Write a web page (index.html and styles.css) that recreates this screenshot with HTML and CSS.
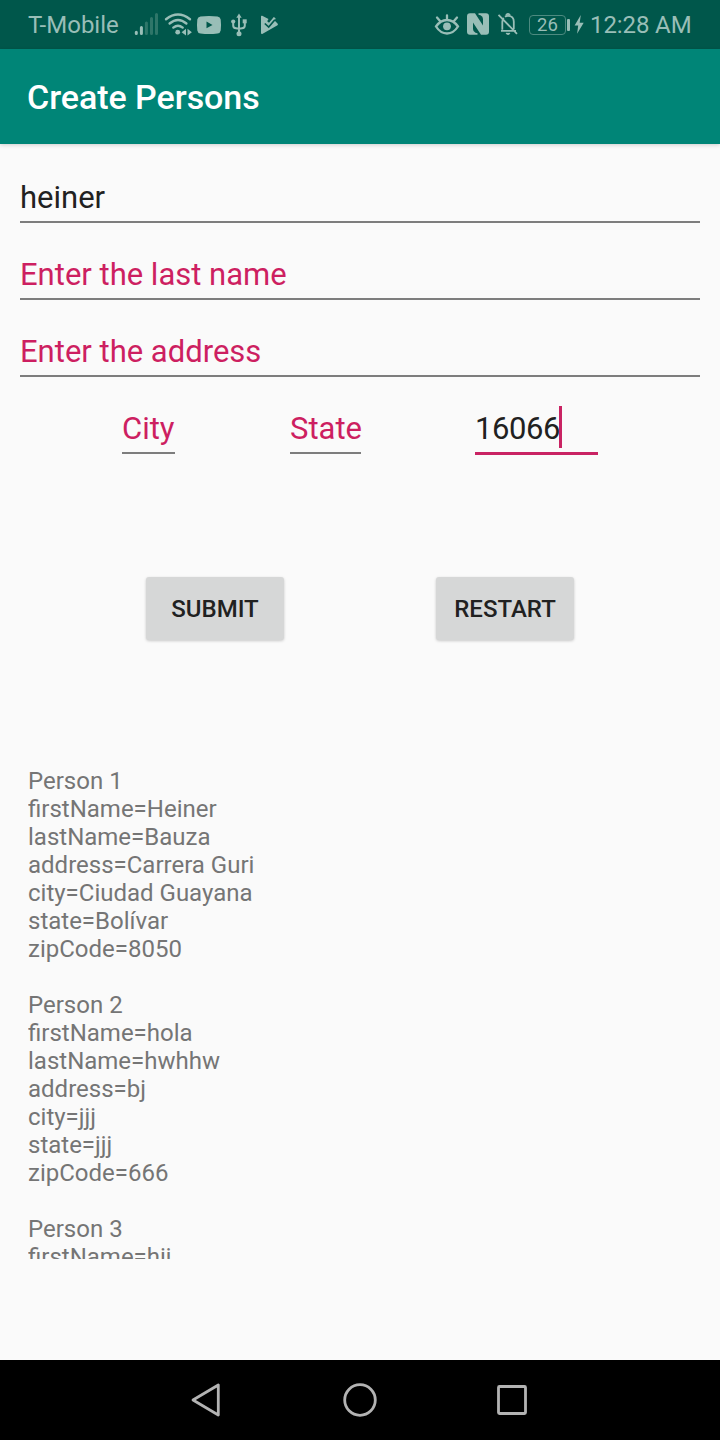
FILE: index.html
```html
<!DOCTYPE html>
<html lang="en">
<head>
<meta charset="utf-8">
<title>Create Persons</title>
<link rel="stylesheet" href="styles.css">
</head>
<body>
<div class="screen">
  <header class="status">
    <span class="carrier">T-Mobile</span>
    <svg class="icons-left" width="150" height="49" viewBox="130 0 150 49">
      <g stroke-width="3" stroke-linecap="round" fill="none" stroke="#99beb7">
        <path d="M136.300 32.200v1.300M141.400 27.500v6"/>
        <path stroke="#2e7669" d="M146.400 23v10.500M151.500 18.500v15M156.500 14.500v19"/>
      </g>
      <g fill="none" stroke="#99beb7" stroke-width="2.400" stroke-linecap="round">
        <path d="M166 19.200Q178 9.800 190 19.200M169.600 23.500Q178 16.500 186.400 23.500M173.300 27.600Q178 23.700 182.700 27.600"/>
      </g>
      <circle cx="177.700" cy="32.200" r="2.400" fill="#99beb7"/>
      <path d="M186 28.800v6.700l-4.400-3.200zM187.500 28.800v6.700l4.400-3.200z" fill="#99beb7"/>
      <path fill="#99beb7" fill-rule="evenodd" d="M200.500 16.500Q209 15.500 217.500 16.500Q220.300 16.800 220.700 19.500Q221.400 25 220.700 30.500Q220.300 33.200 217.500 33.500Q209 34.500 200.500 33.500Q197.700 33.200 197.300 30.500Q196.700 25 197.300 19.500Q197.700 16.800 200.500 16.500ZM206.500 21.500v6.800l6-3.400z"/>
      <path d="M239 17v17M233.200 22v3.500q0 2.500 2.800 2.800l3 .500 3-.500q2.800-.300 2.800-2.800v-3" fill="none" stroke="#99beb7" stroke-width="2"/>
      <g fill="#99beb7"><path d="M239 13.500l2.700 4.200h-5.400z"/><circle cx="239" cy="33.700" r="2.500"/><circle cx="233.200" cy="21.500" r="2.100"/><path d="M242.700 19.300h4v4h-4z"/></g>
      <path fill="#99beb7" d="M261 16.500q0-1.200 1.200-.7l6.300 3.200-1.300 2.200 1.800 1.600 4.800-5.800 1.800 1.200-.8 2.500 2.700 2.800q1 .9 0 1.700l-14.800 8.600q-1.700.7-1.700-1z"/>
      <path d="M264.800 23.500l3.900 3.600 6.200-7.300" fill="none" stroke="#00574b" stroke-width="1.700"/>
    </svg>
    <svg class="icons-right" width="90" height="49" viewBox="432 0 90 49">
      <g fill="none" stroke="#99beb7" stroke-width="2.300" stroke-linecap="round">
        <path d="M436 26.500q4.500-6.500 11-6.500t11 6.500q-4.500 7-11 7t-11-7zM447 19.500v-4.200M440 21l-3-3.500M454 21l3-3.500"/>
      </g>
      <circle cx="447" cy="26.300" r="3.900" fill="#99beb7"/>
      <path fill="#99beb7" d="M470 13.200h5l8 12.300V19q0-2.800-2.500-3.700l-2-.6v-1.500h7.500q3 0 3 3v15.600q0 3-3 3h-5l-8-12.300V29q0 2.800 2.500 3.700l2 .6v1.500H470q-3 0-3-3V16.200q0-3 3-3z"/>
      <g fill="none" stroke="#99beb7" stroke-width="1.800" transform="translate(0 .8)">
        <path d="M498.500 14l18.500 19M501 30h15M502.300 29v-8q0-2.300 1.500-3.800M505 16q1.300-1 3-1 5.800 0 5.800 6v7.500"/>
        <path d="M506.500 15v-1.200q1.500-1.400 3 0V15M506.300 32.200q1.700 2 3.400 0"/>
      </g>
    </svg>
    <span class="battery">26</span><span class="battery-tip"></span>
    <svg class="bolt" width="10" height="20" viewBox="574 14 10 20"><path fill="#99beb7" d="M580.800 14l-6.200 10.600h3.600l-1.100 8.200 6.600-11h-4z"/></svg>
    <span class="clock">12:28 AM</span>
  </header>
  <div class="appbar"><h1 class="title">Create Persons</h1></div>
  <main class="content">
    <div class="field"><span class="value">heiner</span></div>
    <div class="field"><span class="hint">Enter the last name</span></div>
    <div class="field"><span class="hint">Enter the address</span></div>
    <div class="place">
      <div class="field city"><span class="hint">City</span></div>
      <div class="field state"><span class="hint">State</span></div>
      <div class="field zip"><span class="value">16066</span><span class="caret"></span></div>
    </div>
    <div class="actions">
      <button class="button">SUBMIT</button>
      <button class="button">RESTART</button>
    </div>
    <div class="persons">Person 1
firstName=Heiner
lastName=Bauza
address=Carrera Guri
city=Ciudad Guayana
state=Bolívar
zipCode=8050

Person 2
firstName=hola
lastName=hwhhw
address=bj
city=jjj
state=jjj
zipCode=666

Person 3
firstName=hij</div>
  </main>
  <nav class="navbar">
    <svg width="32" height="40" viewBox="190 1380 32 40"><path d="M193 1400L218.300 1385V1415Z"/></svg>
    <svg width="36" height="40" viewBox="342 1380 36 40"><circle cx="360" cy="1400" r="15.300"/></svg>
    <svg width="34" height="40" viewBox="495 1380 34 40"><rect x="498.500" y="1386.500" width="27" height="27" rx="1"/></svg>
  </nav>
</div>
</body>
</html>
```
FILE: styles.css
```css
* { box-sizing: border-box; }
body { margin: 0; font-family: Roboto, "Noto Sans", sans-serif; background: #fafafa; }
.screen { width: 720px; height: 1440px; display: flex; flex-direction: column; overflow: hidden; }
.status { height: 49px; background: #00574b; color: #99beb7; display: flex; align-items: center; flex: none; font-size: 24px; white-space: nowrap; }
.carrier { width: 102px; margin-left: 28px; }
.icons-left { margin-right: 152px; }
.icons-left, .icons-right { flex: none; display: block; }
.battery { width: 37px; height: 20px; margin-left: 7px; border: 1.5px solid #4d8a80; border-radius: 4px; font-size: 18.5px; line-height: 18px; text-align: center; }
.battery-tip { width: 3px; height: 12px; margin-left: 1px; border-radius: 1px; background: #99beb7; }
.bolt { margin-left: 4px; margin-right: 6px; flex: none; }
.clock { letter-spacing: -0.1px; }
.appbar { height: 95px; flex: none; display: flex; align-items: center; padding: 0 27px; background: #008577; box-shadow: 0 1px 4px rgba(0,0,0,.18); }
.title { margin: 0; color: #fff; font-size: 34px; font-weight: 500; line-height: 40px; letter-spacing: -0.05px; }
.content { flex: 1; padding: 32px 20px 0; display: flex; flex-direction: column; min-height: 0; }
.field { height: 47px; margin-bottom: 30px; border-bottom: 2px solid #7d7d7d; font-size: 31px; line-height: 43px; flex: none; white-space: nowrap; }
.value { color: #212121; }
.hint { color: #cd1f61; }
.place { display: flex; height: 77px; flex: none; padding-left: 102px; }
.city { width: 53px; margin-right: 115px; }
.state { width: 71px; margin-right: 114px; }
.zip { width: 123px; height: 48px; border-bottom: 3px solid #c92363; display: flex; }
.zip .value { width: 84px; letter-spacing: -0.4px; }
.caret { width: 3px; height: 42px; margin-top: -1px; background: #c92363; }
.actions { display: flex; gap: 152px; padding: 93px 0 0 126px; flex: none; }
.button { width: 138px; height: 63px; padding: 1px 0 0; border: 0; border-radius: 3px; background: #d6d7d7; color: #212121; font: 500 24px/28px Roboto, sans-serif; box-shadow: 0 1px 3px rgba(0,0,0,.2); }
.persons { margin: 127px 0 0 8px; height: 492px; flex: none; overflow: hidden; white-space: pre; color: #757575; font-size: 24px; line-height: 28px; }
.navbar { height: 80px; flex: none; background: #000; display: flex; align-items: center; padding-left: 190px; }
.navbar svg { fill: none; stroke: #b3b3b3; stroke-width: 2.800; stroke-linejoin: round; margin-right: 120px; }
.navbar svg:nth-child(2) { margin-right: 117px; }
```
